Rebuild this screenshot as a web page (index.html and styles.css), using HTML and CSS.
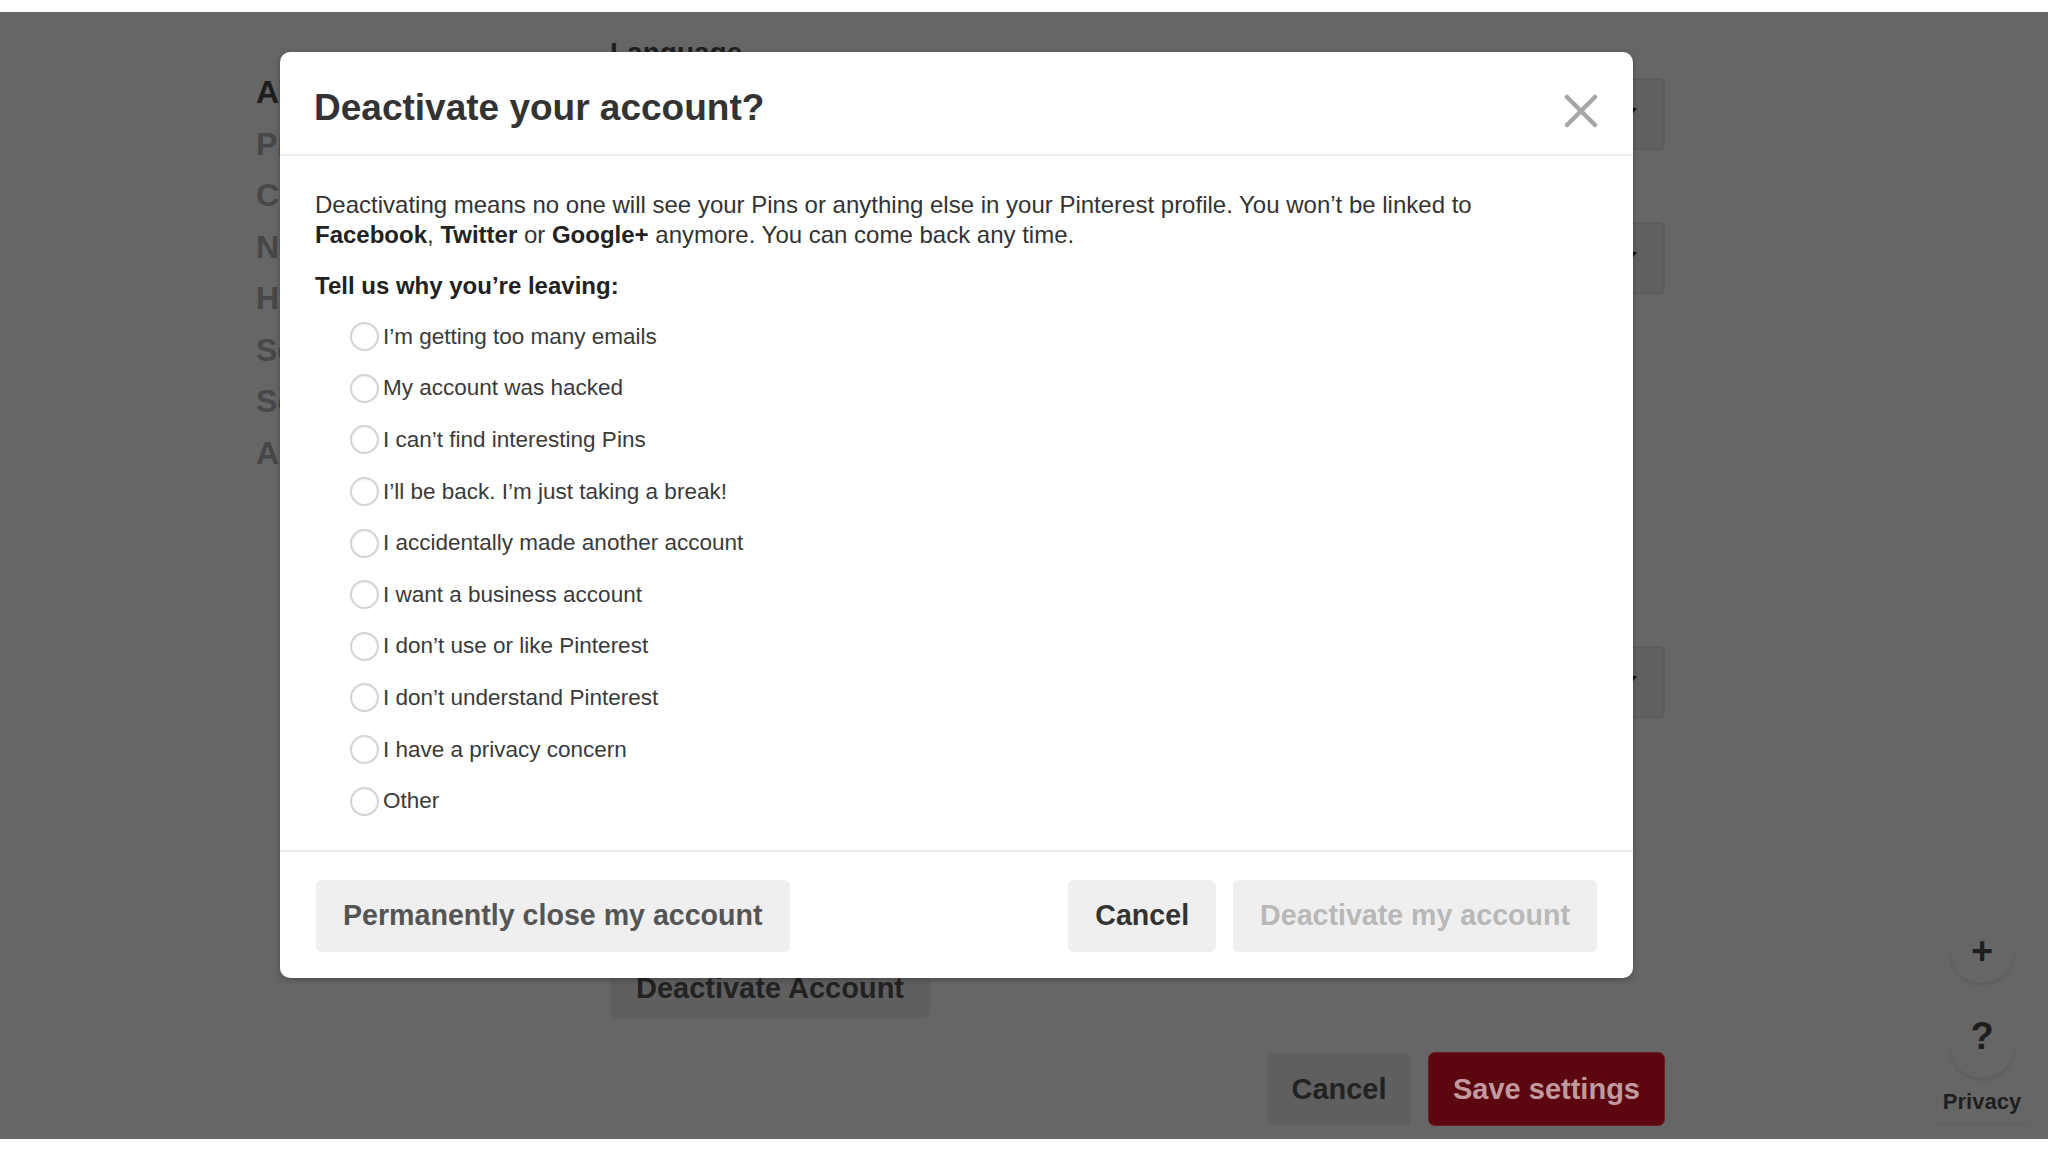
FILE: index.html
```html
<!DOCTYPE html>
<html lang="en">
<head>
    <meta charset="UTF-8">
    <meta name="viewport" content="width=device-width, initial-scale=1.0">
    <title>Account settings</title>
    <link rel="stylesheet" href="styles.css">
</head>
<body>

    <div class="strip"></div>

    <div class="stage">
        <!-- settings page behind the overlay -->
        <div class="settings">
            <ul class="side-nav">
                <li class="active">Account Basics</li>
                <li>Profile</li>
                <li>Claim</li>
                <li>Notifications</li>
                <li>Home feed</li>
                <li>Search privacy</li>
                <li>Security</li>
                <li>Apps</li>
            </ul>

            <div class="main">
                <div class="field">
                    <div class="field-label">Language</div>
                    <div class="select"><span class="arrow"></span></div>
                </div>
                <div class="field">
                    <div class="field-label">Country</div>
                    <div class="select"><span class="arrow"></span></div>
                </div>
                <div class="field gap-big">
                    <div class="field-label">Gender</div>
                    <div class="select"><span class="arrow"></span></div>
                </div>

                <button class="page-btn deactivate">Deactivate Account</button>

                <div class="page-actions">
                    <button class="page-btn">Cancel</button>
                    <button class="page-btn save">Save settings</button>
                </div>
            </div>
        </div>

        <div class="float-tools">
            <div class="tool-circle">+</div>
            <div class="tool-circle">?</div>
            <div class="tool-privacy">Privacy</div>
        </div>

        <!-- modal -->
        <div class="modal">
            <div class="modal-header">
                <h1>Deactivate your account?</h1>
                <button class="close-btn" aria-label="Close">
                    <svg width="34" height="34" viewBox="0 0 34 34">
                        <line x1="3" y1="3" x2="31" y2="31" />
                        <line x1="31" y1="3" x2="3" y2="31" />
                    </svg>
                </button>
            </div>

            <div class="modal-body">
                <p class="intro">Deactivating means no one will see your Pins or anything else in your Pinterest profile. You won’t be linked to <b>Facebook</b>, <b>Twitter</b> or <b>Google+</b> anymore. You can come back any time.</p>
                <div class="reason-title">Tell us why you’re leaving:</div>
                <ul class="reasons">
                    <li><span class="radio"></span>I’m getting too many emails</li>
                    <li><span class="radio"></span>My account was hacked</li>
                    <li><span class="radio"></span>I can’t find interesting Pins</li>
                    <li><span class="radio"></span>I’ll be back. I’m just taking a break!</li>
                    <li><span class="radio"></span>I accidentally made another account</li>
                    <li><span class="radio"></span>I want a business account</li>
                    <li><span class="radio"></span>I don’t use or like Pinterest</li>
                    <li><span class="radio"></span>I don’t understand Pinterest</li>
                    <li><span class="radio"></span>I have a privacy concern</li>
                    <li><span class="radio"></span>Other</li>
                </ul>
            </div>

            <div class="modal-footer">
                <button class="btn">Permanently close my account</button>
                <div class="footer-right">
                    <button class="btn">Cancel</button>
                    <button class="btn disabled">Deactivate my account</button>
                </div>
            </div>
        </div>
    </div>

    <div class="strip bottom"></div>

</body>
</html>
```

FILE: styles.css
```css
body {
    margin: 0;
    background: #fff;
    font-family: "Liberation Sans", Helvetica, Arial, sans-serif;
    color: #333;
}
.strip {
    height: 12px;
    background: #fff;
}
.strip.bottom {
    height: 13px;
}
.stage {
    position: relative;
    height: 1127px;
    background: #666;
    overflow: hidden;
}

/* page behind the overlay */
.settings {
    display: grid;
    grid-template-columns: 354px 1055px;
    padding-left: 256px;
}
.side-nav {
    list-style: none;
    margin: 0;
    padding: 55px 0 0;
    font-size: 32px;
    font-weight: bold;
    color: #474747;
}
.side-nav li {
    height: 51.5px;
    line-height: 51.5px;
    white-space: nowrap;
    overflow: hidden;
    width: 60px;
}
.side-nav li.active {
    color: #1e1e1e;
}
.main {
    padding-top: 24px;
}
.field {
    margin-bottom: 30px;
}
.field.gap-big {
    margin-top: 310px;
}
.field-label {
    font-size: 28px;
    line-height: 34px;
    font-weight: bold;
    color: #1e1e1e;
    margin-bottom: 8px;
}
.select {
    height: 72px;
    border-radius: 6px;
    background: #616161;
    box-shadow: inset 0 0 0 2px #5c5c5c;
    position: relative;
}
.select .arrow {
    position: absolute;
    right: 28px;
    top: 30px;
    border-left: 7px solid transparent;
    border-right: 7px solid transparent;
    border-top: 9px solid #111;
}
.page-btn {
    font-family: inherit;
    font-size: 29px;
    font-weight: bold;
    height: 72px;
    padding: 0 20px;
    border: none;
    border-radius: 6px;
    background: #5f5f5f;
    color: #222;
    white-space: nowrap;
}
.page-btn.deactivate {
    display: block;
    width: 320px;
    height: 59px;
    margin-top: 241px;
}
.page-actions {
    display: flex;
    justify-content: flex-end;
    gap: 18px;
    margin-top: 35px;
    padding-right: 1px;
}
.page-actions .page-btn {
    width: 144px;
}
.page-actions .page-btn.save {
    width: 235px;
    background: #5c0710;
    color: #c09a9d;
    box-shadow: 0 0 0 1px #6e1a20;
}
.float-tools {
    position: absolute;
    right: 34px;
    top: 907px;
    width: 64px;
    display: flex;
    flex-direction: column;
    align-items: center;
    gap: 31px;
}
.tool-circle {
    width: 64px;
    height: 64px;
    border-radius: 50%;
    background: #666;
    box-shadow: 0 3px 3px rgba(0, 0, 0, 0.08);
    text-align: center;
    font-size: 38px;
    line-height: 64px;
    font-weight: bold;
    color: #1e1e1e;
}
.tool-circle + .tool-circle {
    line-height: 44px;
}
.tool-privacy {
    margin-top: -24px;
    font-size: 22px;
    font-weight: bold;
    color: #1e1e1e;
    padding: 4px 6px 8px;
    border-radius: 4px;
    box-shadow: 0 2px 2px rgba(0, 0, 0, 0.06);
}

/* modal */
.modal {
    position: absolute;
    left: 280px;
    top: 40px;
    width: 1353px;
    background: #fff;
    border-radius: 10px;
    box-shadow: 0 2px 6px rgba(0, 0, 0, 0.25);
}
.modal-header {
    height: 92px;
    display: flex;
    align-items: center;
    justify-content: space-between;
    padding: 10px 35px 0 34px;
    border-bottom: 2px solid #efefef;
    box-shadow: 0 2px 3px rgba(0, 0, 0, 0.03);
}
.modal-header h1 {
    margin: 0;
    font-size: 37px;
    color: #333;
}
.close-btn {
    border: none;
    background: none;
    padding: 0;
    width: 34px;
    height: 34px;
    margin-top: 5px;
}
.close-btn line {
    stroke: #a6a6a6;
    stroke-width: 4.5;
    stroke-linecap: round;
}
.modal-body {
    padding: 34px 36px 23px 35px;
}
.intro {
    margin: 0;
    font-size: 24px;
    line-height: 30px;
    color: #333;
}
.intro b {
    color: #222;
}
.reason-title {
    margin-top: 21px;
    font-size: 24px;
    line-height: 30px;
    font-weight: bold;
    color: #222;
}
.reasons {
    list-style: none;
    margin: 10px 0 0;
    padding: 0 0 0 35px;
}
.reasons li {
    height: 51.6px;
    display: flex;
    align-items: center;
    gap: 4px;
    font-size: 22.5px;
    color: #3a3a3a;
}
.radio {
    width: 25px;
    height: 25px;
    border-radius: 50%;
    border: 2px solid #d4d4d4;
    box-shadow: inset 0 1px 2px rgba(0, 0, 0, 0.06);
    flex-shrink: 0;
}
.modal-footer {
    display: flex;
    justify-content: space-between;
    padding: 28px 36px 26px;
    border-top: 2px solid #ebebeb;
}
.footer-right {
    display: flex;
    gap: 17px;
}
.btn {
    font-family: inherit;
    font-size: 28.6px;
    font-weight: bold;
    height: 72px;
    padding: 0 27px;
    border: none;
    border-radius: 6px;
    background: #efefef;
    color: #555;
}
.footer-right .btn:first-child {
    color: #333;
}
.btn.disabled {
    color: #b8b8b8;
}
```
